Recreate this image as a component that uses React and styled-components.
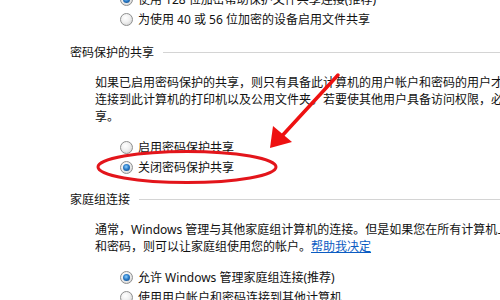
import React from 'react'
import styled, { createGlobalStyle } from 'styled-components'

const Global = createGlobalStyle`
	html, body {
		margin: 0;
		padding: 0;
		background: #fff;
		overflow: hidden;
	}
	body {
		font-family: 'Noto Sans', 'Noto Sans CJK SC', sans-serif;
		font-size: 12px;
		color: #111;
	}
`

const Page = styled.div`
	position: relative;
	width: 500px;
	height: 300px;
	overflow: hidden;
`

const Content = styled.div`
	margin-top: -11px;
	padding-left: 70px;
`

const RadioGroup = styled.div`
	margin-left: 50px;
	margin-top: ${p => p.top || 0}px;
`

const RadioRow = styled.label`
	display: flex;
	align-items: center;
	height: 20px;
	white-space: nowrap;
`

const Dot = styled.span`
	box-sizing: border-box;
	flex: none;
	width: 13px;
	height: 13px;
	margin-right: 5px;
	border-radius: 50%;
	border: 1px solid #8e8f8f;
	background: radial-gradient(circle at 40% 35%, #ffffff 0%, #f0f0f0 45%, #c9c9c9 100%);
	display: flex;
	align-items: center;
	justify-content: center;

	&::after {
		content: '';
		display: ${p => (p.checked ? 'block' : 'none')};
		width: 7px;
		height: 7px;
		border-radius: 50%;
		background: radial-gradient(circle at 45% 40%, #8fd0ff 0%, #2a7cc8 45%, #0d3b74 100%);
	}
`

const Section = styled.div`
	margin-top: ${p => p.top || 15}px;
`

const Header = styled.div`
	display: flex;
	align-items: center;
	line-height: 17px;
	white-space: nowrap;

	&::after {
		content: '';
		flex: 1;
		height: 1px;
		margin-left: 9px;
		background: #d4d4d4;
	}
`

const Para = styled.div`
	margin-left: 25px;
	margin-top: 13px;
	line-height: 17px;

	div {
		white-space: nowrap;
	}
`

const Link = styled.a`
	color: #0b5cc2;
	text-decoration: underline;
`

const Marks = styled.svg`
	position: absolute;
	left: 0;
	top: 0;
	pointer-events: none;
`

const Radio = ({ checked, children }) => (
	<RadioRow>
		<Dot checked={checked} />
		{children}
	</RadioRow>
)

const App = () => {
	return (
		<Page>
			<Global />
			<Content>
				<RadioGroup>
					<Radio checked>使用 128 位加密帮助保护文件共享连接(推荐)</Radio>
					<Radio>为使用 40 或 56 位加密的设备启用文件共享</Radio>
				</RadioGroup>

				<Section>
					<Header>密码保护的共享</Header>
					<Para>
						<div>如果已启用密码保护的共享，则只有具备此计算机的用户帐户和密码的用户才可以访问共享文件、</div>
						<div>连接到此计算机的打印机以及公用文件夹。若要使其他用户具备访问权限，必须关闭密码保护的共</div>
						<div>享。</div>
					</Para>
					<RadioGroup top={12}>
						<Radio>启用密码保护共享</Radio>
						<Radio checked>关闭密码保护共享</Radio>
					</RadioGroup>
				</Section>

				<Section top={14}>
					<Header>家庭组连接</Header>
					<Para>
						<div>通常，Windows 管理与其他家庭组计算机的连接。但是如果您在所有计算机上都有相同的用户帐户</div>
						<div>
							和密码，则可以让家庭组使用您的帐户。<Link>帮助我决定</Link>
						</div>
					</Para>
					<RadioGroup top={12}>
						<Radio checked>允许 Windows 管理家庭组连接(推荐)</Radio>
						<Radio>使用用户帐户和密码连接到其他计算机</Radio>
					</RadioGroup>
				</Section>
			</Content>

			{/* red annotation drawn over the dialog */}
			<Marks width='500' height='300' viewBox='0 0 500 300'>
				<ellipse cx='187' cy='167' rx='89' ry='15.5' fill='none' stroke='#e3151b' strokeWidth='3' />
				<path d='M338 75 L281 137' stroke='#ee1111' strokeWidth='3.5' strokeLinecap='round' />
				<polygon points='270,148 273,126 292,142' fill='#ee1111' />
			</Marks>
		</Page>
	)
}

export default App
